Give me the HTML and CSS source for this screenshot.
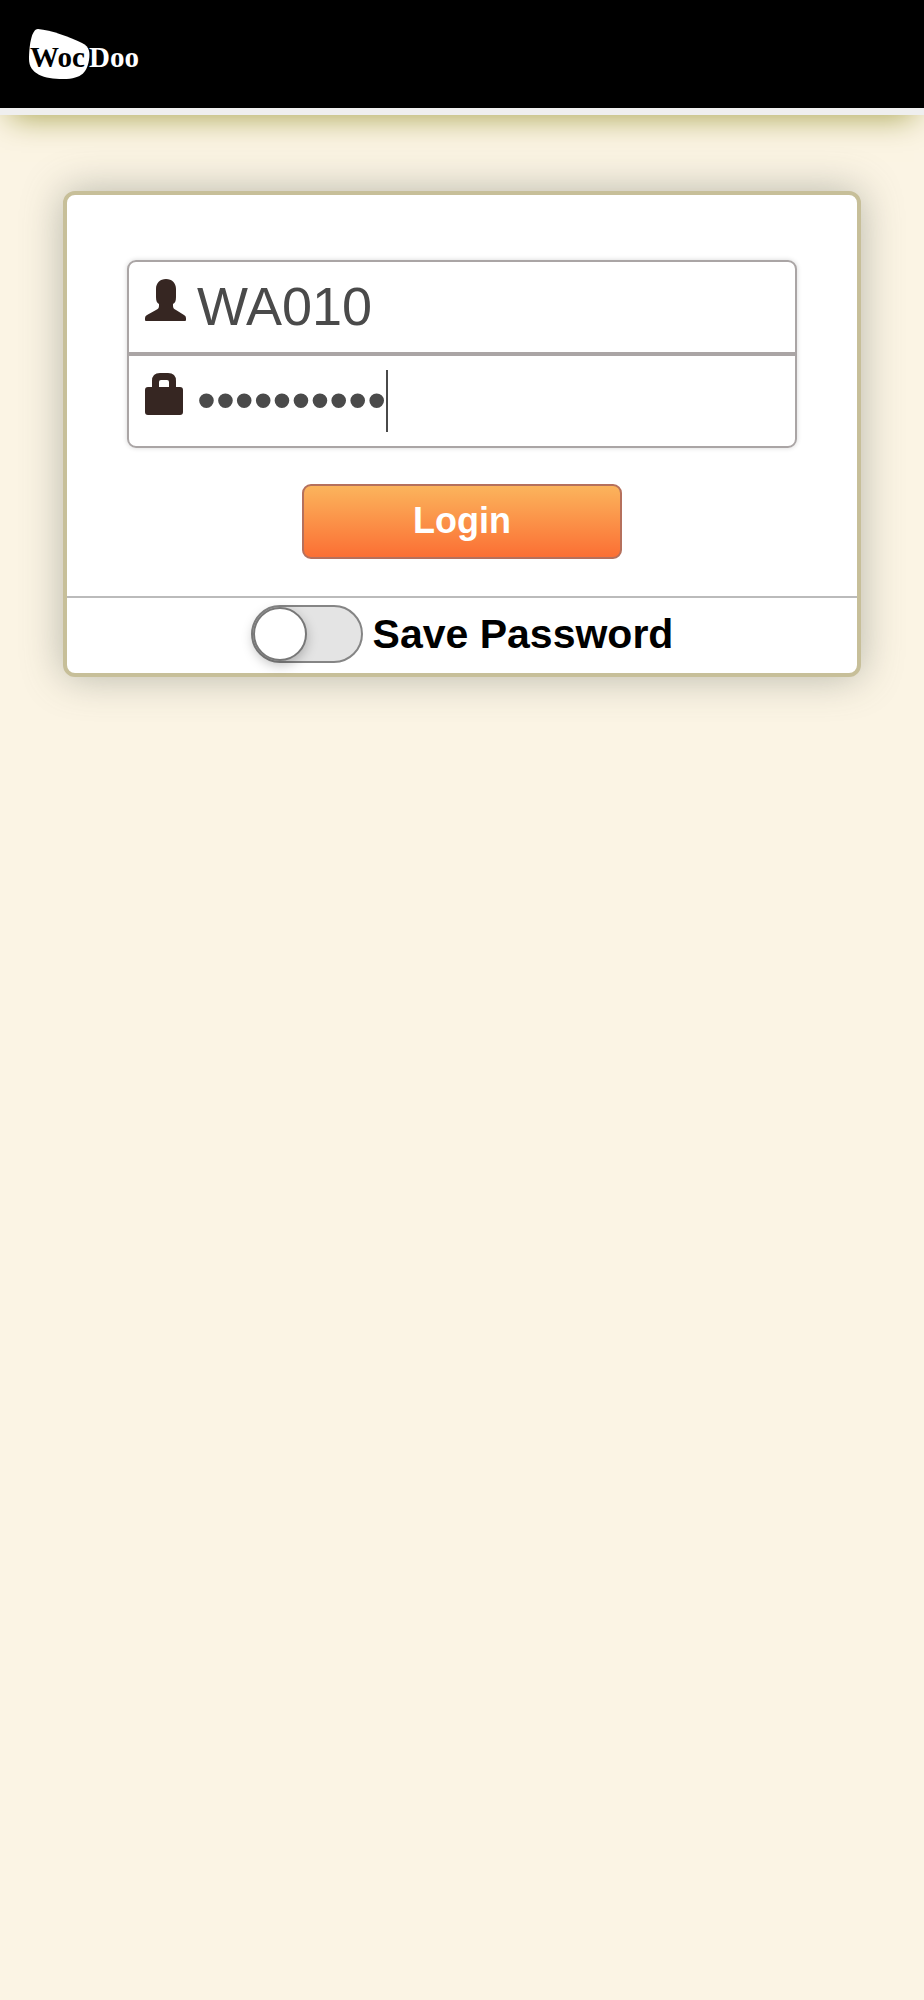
FILE: index.html
```html
<!DOCTYPE html>
<html lang="en">
<head>
<meta charset="utf-8">
<meta name="viewport" content="width=device-width, initial-scale=1">
<title>WooDoo Login</title>
<link rel="stylesheet" href="styles.css">
</head>
<body>
<header class="topbar">
  <svg class="logo" width="112" height="54" viewBox="28 27 112 54" role="img" aria-label="WocDoo">
    <path fill="#fff" d="M38 29C51 30 70 37 82 43C90 47 90 53 89 60C87 71 83 79 63 79C44 79 29 74 29 59C29 48 31 29 38 29Z"/>
    <text class="logo-text" x="30" y="67" fill="#000">Woc</text>
    <text class="logo-text" x="89" y="67" fill="#fff">Doo</text>
  </svg>
</header>
<main class="page">
  <form class="card">
    <div class="card-body">
      <div class="fields">
        <label class="field">
          <svg class="icon" width="42" height="42" viewBox="0 0 42 42" aria-hidden="true"><path d="M21 0C27 0 31 4 31 10V18C31 22 30 24 28 25V27C28 29 29 30 31 31L39 36Q41 37 41 39V41Q41 42 40 42H1Q0 42 0 41V39Q0 37 2 36L11 31C13 30 14 29 14 27V25C12 24 11 22 11 18V10C11 4 15 0 21 0Z"/></svg>
          <input class="input" type="text" value="WA010" aria-label="Username">
        </label>
        <label class="field">
          <svg class="icon" width="42" height="42" viewBox="0 0 42 42" aria-hidden="true"><path fill-rule="evenodd" d="M7 14V8Q7 0 15 0H23Q31 0 31 8V14H35Q38 14 38 17V39Q38 42 35 42H3Q0 42 0 39V17Q0 14 3 14ZM14 14H24V9Q24 7 22 7H16Q14 7 14 9Z"/></svg>
          <input class="input" type="password" value="woodoo0100" aria-label="Password">
          <span class="caret"></span>
        </label>
      </div>
      <button class="login" type="button">Login</button>
    </div>
    <div class="save">
      <input class="toggle" type="checkbox" role="switch" id="save">
      <label for="save">Save Password</label>
    </div>
  </form>
</main>
</body>
</html>
```
FILE: styles.css
```css
*,
*::before {
  box-sizing: border-box;
}

body {
  margin: 0;
  min-height: 100vh;
  background: #fbf4e4;
  font-family: "Liberation Sans", Arial, sans-serif;
  overflow-x: hidden;
}

.topbar {
  height: 115px;
  padding: 27px 28px;
  background: #000;
  border-bottom: 7px solid #efefef;
  box-shadow: 0 12px 30px -10px #a8a450;
}

.logo {
  display: block;
}

.logo-text {
  font: bold 29px "Liberation Serif", serif;
}

.page {
  padding: 76px 63px;
}

.card {
  background: #fff;
  border: 4px solid #c7bf99;
  border-radius: 12px;
  box-shadow: 0 0 40px rgba(100, 106, 98, 0.45);
}

.card-body {
  display: flex;
  flex-direction: column;
  align-items: center;
  gap: 36px;
  padding: 65px 60px 37px;
}

.fields {
  width: 100%;
  border-radius: 9px;
  box-shadow: 0 0 5px rgba(0, 0, 0, 0.16);
}

.field {
  position: relative;
  display: flex;
  height: 94px;
  padding: 17px 16px 0;
  gap: 10px;
  border: 2px solid #aaa5a5;
  background: #fff;
}

.field:first-child {
  border-radius: 9px 9px 0 0;
}

.field:last-child {
  border-radius: 0 0 9px 9px;
}

.icon {
  flex: none;
  fill: #362622;
}

.input {
  flex: 1;
  min-width: 0;
  height: 54px;
  padding: 0;
  border: 0;
  outline: 0;
  background: transparent;
  color: #4a4a4a;
  caret-color: transparent;
  font: 54px/54px "Liberation Sans", Arial, sans-serif;
}

.caret {
  position: absolute;
  left: 257px;
  top: 14px;
  width: 2px;
  height: 62px;
  background: #4a4a4a;
}

.login {
  width: 320px;
  max-width: 100%;
  height: 75px;
  padding: 0 0 2px;
  border: 2px solid #b5705c;
  border-radius: 9px;
  background: linear-gradient(#fbb45c, #fb6f34);
  color: #fff;
  font: bold 36px "Liberation Sans", Arial, sans-serif;
}

.save {
  display: flex;
  align-items: center;
  justify-content: center;
  gap: 10px;
  height: 77px;
  padding-bottom: 3px;
  border-top: 2px solid #bbb;
  font-size: 41px;
  font-weight: bold;
}

.toggle {
  appearance: none;
  flex: none;
  display: flex;
  align-items: center;
  width: 112px;
  height: 58px;
  margin: 0;
  border: 2px solid #858585;
  border-radius: 29px;
  background: #e4e4e4;
}

.toggle::before {
  content: "";
  width: 54px;
  height: 54px;
  border-radius: 50%;
  border: 2px solid #777;
  background: #fff;
  box-shadow: 0 4px 12px rgba(0, 0, 0, 0.25);
}

.toggle:checked {
  justify-content: flex-end;
}
```
